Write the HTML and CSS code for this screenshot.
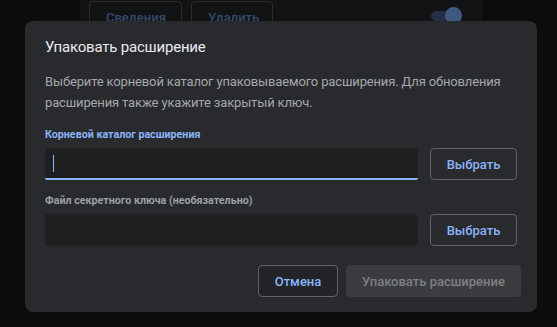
FILE: index.html
```html
<!DOCTYPE html>
<html>
<head>
    <title>Упаковать расширение</title>
    <link rel="stylesheet" href="styles.css">
</head>
<body>
    <!-- Extension card behind the dialog -->
    <div class="card">
        <div class="card-actions">
            <button class="card-button">Сведения</button>
            <button class="card-button">Удалить</button>
            <span class="toggle"><span class="knob"></span></span>
        </div>
    </div>

    <!-- Pack extension dialog -->
    <div class="dialog">
        <h1 class="dialog-title">Упаковать расширение</h1>
        <div class="dialog-body">
            <p class="description">Выберите корневой каталог упаковываемого расширения. Для обновления расширения также укажите закрытый ключ.</p>

            <label class="field-label focused">Корневой каталог расширения</label>
            <div class="field-row">
                <div class="field focused"><span class="caret"></span></div>
                <button class="outline-button">Выбрать</button>
            </div>

            <label class="field-label">Файл секретного ключа (необязательно)</label>
            <div class="field-row">
                <div class="field"></div>
                <button class="outline-button">Выбрать</button>
            </div>
        </div>
        <div class="dialog-buttons">
            <button class="outline-button cancel">Отмена</button>
            <button class="action-button" disabled>Упаковать расширение</button>
        </div>
    </div>
</body>
</html>
```

FILE: styles.css
```css
body {
    font-family: Roboto, "Noto Sans", sans-serif;
    background-color: #0c0c0d;
    margin: 0;
    height: 327px;
    overflow: hidden;
}

button {
    font-family: inherit;
}

/* Card in the background */
.card {
    margin-left: 80px;
    width: 402px;
    height: 160px;
    background-color: #121314;
}

.card-actions {
    display: flex;
    align-items: center;
    padding: 1px 0 0 9px;
}

.card-button {
    height: 32px;
    padding: 0 16px;
    margin-right: 9px;
    background: none;
    border: 1px solid #2a2b2e;
    border-radius: 4px;
    color: #34496a;
    font-size: 13px;
    font-weight: 500;
}

.card-button:first-child {
    width: 93px;
}

.card-button:nth-child(2) {
    width: 82px;
}

.toggle {
    position: relative;
    margin-left: auto;
    margin-right: 23px;
    margin-top: -2px;
    width: 28px;
    height: 10px;
    border-radius: 5px;
    background-color: #242f44;
}

.knob {
    position: absolute;
    right: -3px;
    top: -4px;
    width: 17px;
    height: 17px;
    border-radius: 50%;
    background-color: #3f5882;
}

/* Dialog */
.dialog {
    position: absolute;
    left: 25px;
    top: 21px;
    width: 512px;
    height: 291px;
    background-color: #292a2d;
    border-radius: 8px;
    box-sizing: border-box;
}

.dialog-title {
    margin: 0;
    padding: 16px 20px 15px;
    font-size: 15px;
    font-weight: 400;
    letter-spacing: -0.2px;
    line-height: 20px;
    color: #e8eaed;
}

.dialog-body {
    padding: 0 20px;
}

.description {
    margin: 0;
    font-size: 13px;
    letter-spacing: -0.15px;
    line-height: 20.5px;
    color: #a4a7ab;
}

.field-label {
    display: block;
    margin: 14px 0 5px;
    font-size: 10.7px;
    font-weight: 700;
    line-height: 16px;
    color: #9aa0a6;
}

.field-label.focused {
    color: #8ab4f8;
}

.field-row + .field-label {
    margin-top: 13px;
}

.field-row {
    display: flex;
    gap: 12px;
}

.field {
    flex: 1;
    height: 32px;
    box-sizing: border-box;
    background-color: #1e1f21;
    border-radius: 4px;
    padding: 7px 8px;
}

.field.focused {
    border-bottom: 2px solid #8ab4f8;
    border-radius: 4px 4px 2px 2px;
}

.caret {
    display: block;
    width: 1px;
    height: 17px;
    background-color: #8ab4f8;
}

.outline-button {
    height: 32px;
    width: 87px;
    background-color: transparent;
    border: 1px solid #5f6368;
    border-radius: 4px;
    color: #8ab4f8;
    font-size: 13px;
    font-weight: 500;
}

.dialog-buttons {
    display: flex;
    justify-content: flex-end;
    gap: 8px;
    padding: 19px 16px 16px;
}

.cancel {
    width: 80px;
    background-color: #232427;
}

.action-button {
    height: 32px;
    width: 175px;
    background-color: #3b3c3f;
    border: none;
    border-radius: 4px;
    color: #7e8083;
    font-size: 13px;
    font-weight: 500;
}
```
